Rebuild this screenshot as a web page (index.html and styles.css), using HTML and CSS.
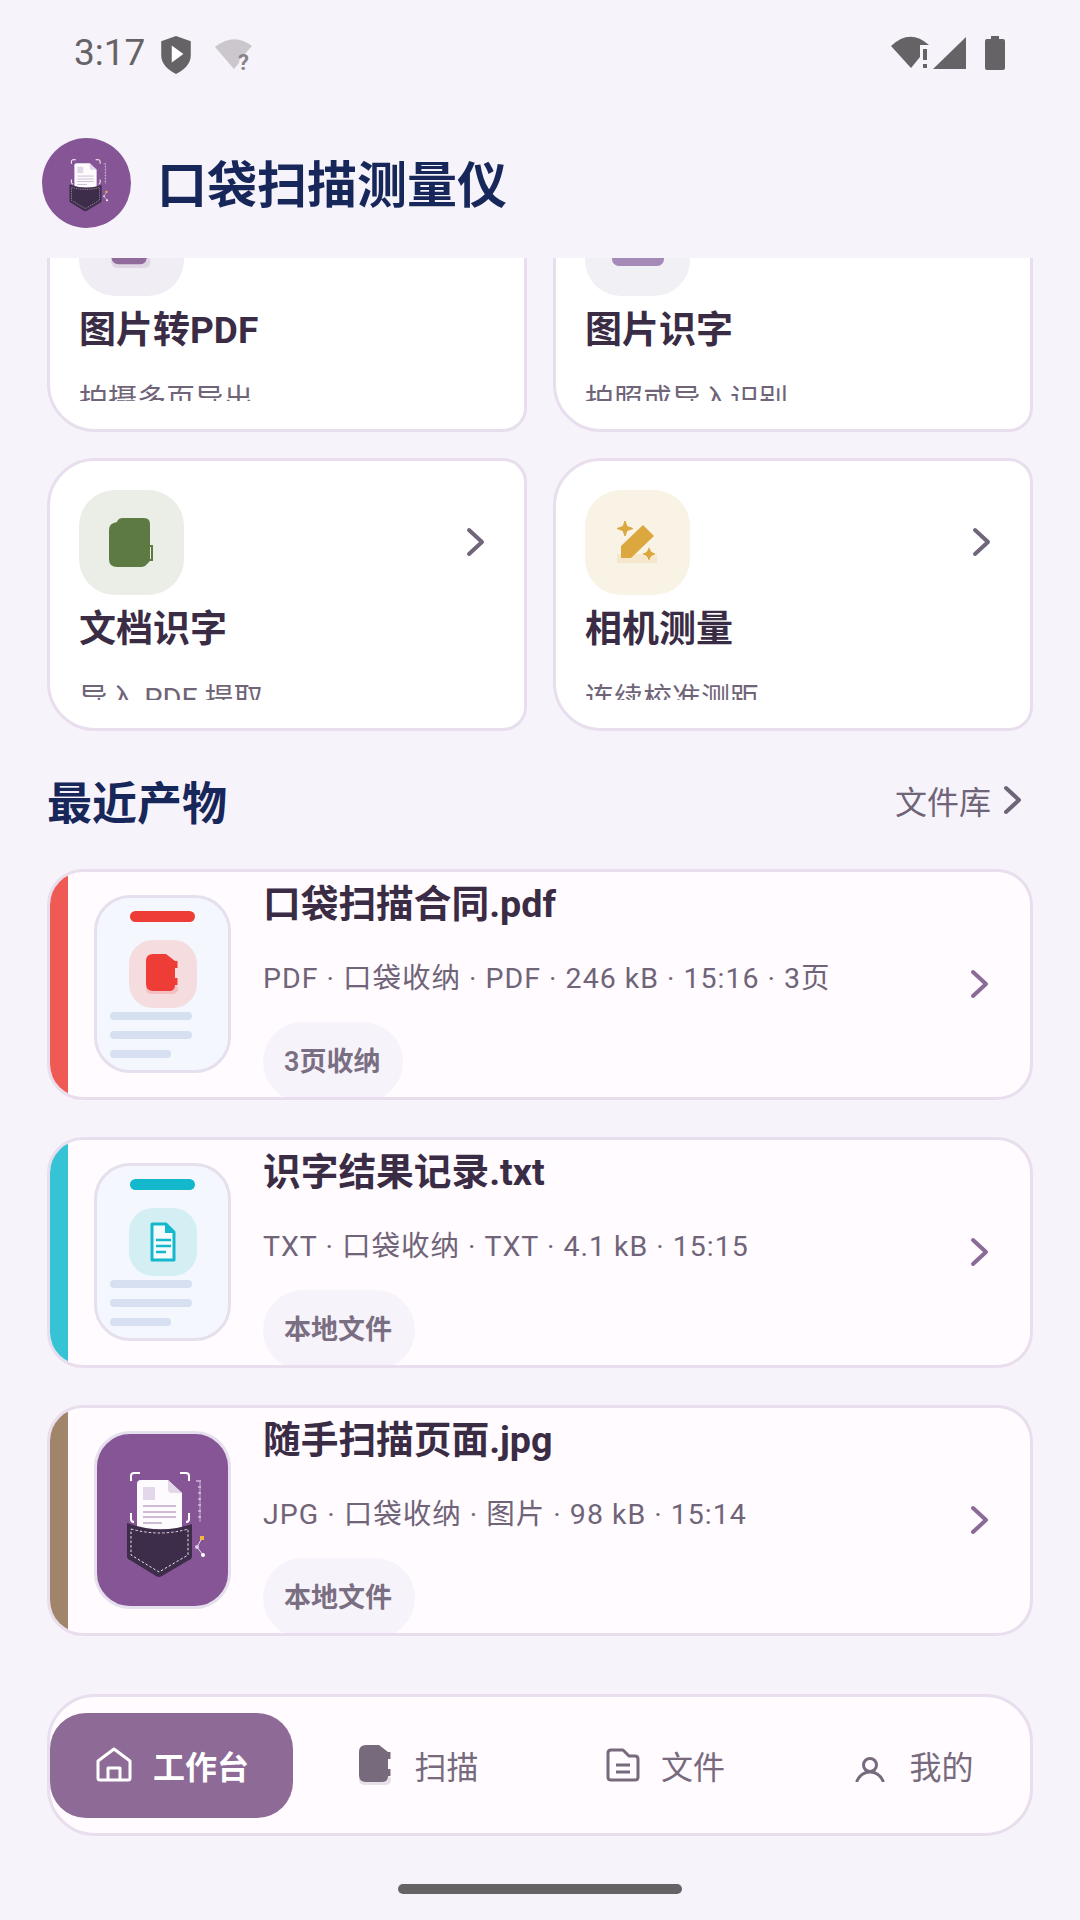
FILE: index.html
```html
<!DOCTYPE html>
<html lang="zh-CN">
<head>
    <meta charset="UTF-8">
    <meta name="viewport" content="width=device-width, initial-scale=1.0">
    <title>口袋扫描测量仪</title>
    <link rel="stylesheet" href="styles.css">
</head>
<body>
    <svg class="defs" width="0" height="0">
        <symbol id="pocket" viewBox="0 0 137 178">
            <path d="M37 50V45Q37 42 40 42H46M86 42H92Q95 42 95 45V50M37 82V88Q37 91 40 91M95 82V88Q95 91 92 91" fill="none" stroke="#fff" stroke-width="2"/>
            <path d="M106 50V91" stroke="#a583b2" stroke-width="2"/>
            <path d="M102 50H107M104 56H107M104 62H107M104 68H107M104 74H107M104 80H107M104 86H107" stroke="#efe8f2" stroke-width="1"/>
            <path d="M47 49H74L88 62V100H43V53Q43 49 47 49Z" fill="#fdfbfe"/>
            <path d="M74 49L88 62H78Q74 62 74 58Z" fill="#e3d8ea"/>
            <rect x="49" y="56" width="12" height="13" fill="#e3d8ea"/>
            <path d="M49 75H82M49 81H82M49 86H82M49 92H68" stroke="#cdbcd6" stroke-width="2"/>
            <path d="M33 92Q66 104 98 93V125Q98 128 95 129L68 145Q65 147 62 145L36 129Q33 128 33 125Z" fill="#3d2c4a"/>
            <path d="M37 98Q66 106 94 98V124L65 141L37 124Z" fill="none" stroke="#e9e2ee" stroke-width="1" stroke-dasharray="2.5 2"/>
            <path d="M108 107L103 116L109 124" fill="none" stroke="#e6dcec" stroke-width="1"/>
            <rect x="106" y="105" width="4" height="4" fill="#f0b93a"/>
            <circle cx="103" cy="116" r="2" fill="#dccde4"/>
            <circle cx="109" cy="124" r="2" fill="#fff"/>
        </symbol>
        <symbol id="blob" viewBox="0 0 44 49">
            <path d="M14 0H35Q41 0 41 6V41Q41 44 38 46Q36 49 32 49H8Q0 49 0 41V12Q0 5 8 4Q9 0 14 0Z" fill="currentColor"/>
            <path d="M40 28H43V42H40" fill="none" stroke="currentColor" stroke-width="2"/>
        </symbol>
        <symbol id="blob-cut" viewBox="0 0 34 40">
            <rect x="0" y="30" width="32" height="10" rx="5" fill="currentColor" opacity=".18"/>
            <path d="M7 0H20L29 7V31Q29 37 23 37H7Q0 37 0 30V7Q0 0 7 0Z" fill="currentColor"/>
            <rect x="29" y="7" width="2.5" height="7" fill="currentColor"/>
            <rect x="29" y="24" width="2.5" height="7" fill="currentColor"/>
        </symbol>
        <symbol id="chev" viewBox="0 0 20 30">
            <path d="M3 3L16 15L3 27" fill="none" stroke="currentColor" stroke-width="4" stroke-linecap="round" stroke-linejoin="round"/>
        </symbol>
    </svg>

    <div class="app">
        <div class="status">
            <span class="clock">3:17</span>
            <svg class="st-shield" width="30" height="38" viewBox="0 0 28 36">
                <path d="M14 0L28 5V18Q28 29 14 36Q0 29 0 18V5Z" fill="#666366"/>
                <path d="M10 9L21 17L10 25Z" fill="#fff"/>
            </svg>
            <svg class="st-wifi-q" width="38" height="32" viewBox="0 0 38 32">
                <path d="M19 30L0 8Q19 -7 37 7L29 16Q24 18 24 24Z" fill="#cbc7cc"/>
                <text x="23" y="31" class="st-q">?</text>
            </svg>
            <span class="st-space"></span>
            <svg class="st-wifi" width="38" height="33" viewBox="0 0 38 33">
                <path d="M20 32L0 10Q19 -8 38 9H29V21Z" fill="#666366"/>
                <rect x="32" y="13" width="4" height="11" fill="#666366"/>
                <rect x="32" y="28" width="4" height="4" fill="#666366"/>
            </svg>
            <svg class="st-signal" width="33" height="32" viewBox="0 0 33 32">
                <path d="M0 32L33 0V32Z" fill="#666366"/>
            </svg>
            <svg class="st-batt" width="20" height="34" viewBox="0 0 20 34">
                <path d="M6 0H14V3H18Q20 3 20 5V32Q20 34 18 34H2Q0 34 0 32V5Q0 3 2 3H6Z" fill="#666366"/>
            </svg>
        </div>

        <header class="top">
            <div class="logo">
                <svg width="68" height="88"><use href="#pocket"/></svg>
            </div>
            <h1>口袋扫描测量仪</h1>
        </header>

        <main class="scroller">
            <div class="tools">
                <div class="tool">
                    <div class="tool-top">
                        <div class="tool-icon tint-plum">
                            <svg width="44" height="49"><use href="#blob-cut"/></svg>
                        </div>
                    </div>
                    <div class="tool-name">图片转PDF</div>
                    <div class="tool-sub"><span>拍摄多页导出</span></div>
                </div>
                <div class="tool">
                    <div class="tool-top">
                        <div class="tool-icon tint-lilac">
                            <svg width="52" height="44" viewBox="0 0 52 44"><rect width="52" height="44" rx="7" fill="currentColor"/></svg>
                        </div>
                    </div>
                    <div class="tool-name">图片识字</div>
                    <div class="tool-sub"><span>拍照或导入识别</span></div>
                </div>
                <div class="tool">
                    <div class="tool-top">
                        <div class="tool-icon tint-green">
                            <svg class="tool-blob" width="44" height="49"><use href="#blob"/></svg>
                        </div>
                        <svg class="tool-chev" width="20" height="30"><use href="#chev"/></svg>
                    </div>
                    <div class="tool-name">文档识字</div>
                    <div class="tool-sub"><span>导入 PDF 提取</span></div>
                </div>
                <div class="tool">
                    <div class="tool-top">
                        <div class="tool-icon tint-gold">
                            <svg width="42" height="44" viewBox="0 0 42 44">
                                <rect x="0" y="33" width="40" height="9" fill="currentColor" opacity=".16"/>
                                <path d="M4 25L26 4L37 15L14 37H4Z" fill="currentColor"/>
                                <path d="M8 0L10 5.5L16 7.5L10 9.5L8 15L6 9.5L0 7.5L6 5.5Z" fill="currentColor" stroke="currentColor" stroke-width="1"/>
                                <path d="M32 25L34.5 30.5L40 33L34.5 35.5L32 41L29.5 35.5L24 33L29.5 30.5Z" fill="currentColor" stroke="#f9f3e6" stroke-width="1"/>
                            </svg>
                        </div>
                        <svg class="tool-chev" width="20" height="30"><use href="#chev"/></svg>
                    </div>
                    <div class="tool-name">相机测量</div>
                    <div class="tool-sub"><span>连续校准测距</span></div>
                </div>
            </div>

            <div class="section-head">
                <h2>最近产物</h2>
                <div class="section-link">
                    <span>文件库</span>
                    <svg width="20" height="30"><use href="#chev"/></svg>
                </div>
            </div>

            <div class="rows">
                <div class="row">
                    <div class="strip strip-red"></div>
                    <div class="thumb thumb-red">
                        <div class="thumb-bar"></div>
                        <div class="thumb-icon">
                            <svg width="34" height="40"><use href="#blob-cut"/></svg>
                        </div>
                        <div class="thumb-line"></div>
                        <div class="thumb-line"></div>
                        <div class="thumb-line short"></div>
                    </div>
                    <div class="row-text">
                        <div class="row-name">口袋扫描合同.pdf</div>
                        <div class="row-meta">PDF · 口袋收纳 · PDF · 246 kB · 15:16 · 3页</div>
                        <div class="chip">3页收纳</div>
                    </div>
                    <svg class="row-chev" width="20" height="30"><use href="#chev"/></svg>
                </div>

                <div class="row">
                    <div class="strip strip-teal"></div>
                    <div class="thumb thumb-teal">
                        <div class="thumb-bar"></div>
                        <div class="thumb-icon">
                            <svg width="26" height="40" viewBox="0 0 26 40">
                                <path d="M2 2H16L24 10V38H2Z" fill="#f4fbfc" stroke="currentColor" stroke-width="3" stroke-linejoin="round"/>
                                <path d="M15 2L24 11H15Z" fill="currentColor"/>
                                <path d="M6 18H21M6 24H21M6 30H16" stroke="currentColor" stroke-width="2.5"/>
                            </svg>
                        </div>
                        <div class="thumb-line"></div>
                        <div class="thumb-line"></div>
                        <div class="thumb-line short"></div>
                    </div>
                    <div class="row-text">
                        <div class="row-name">识字结果记录.txt</div>
                        <div class="row-meta">TXT · 口袋收纳 · TXT · 4.1 kB · 15:15</div>
                        <div class="chip">本地文件</div>
                    </div>
                    <svg class="row-chev" width="20" height="30"><use href="#chev"/></svg>
                </div>

                <div class="row">
                    <div class="strip strip-brown"></div>
                    <div class="thumb thumb-photo">
                        <svg width="131" height="172" viewBox="3 3 131 172"><use href="#pocket" width="137" height="178"/></svg>
                    </div>
                    <div class="row-text">
                        <div class="row-name">随手扫描页面.jpg</div>
                        <div class="row-meta">JPG · 口袋收纳 · 图片 · 98 kB · 15:14</div>
                        <div class="chip">本地文件</div>
                    </div>
                    <svg class="row-chev" width="20" height="30"><use href="#chev"/></svg>
                </div>
            </div>
        </main>

        <nav class="tabs">
            <div class="tab active">
                <svg width="36" height="36" viewBox="0 0 36 36">
                    <path d="M2 14L18 2L34 14V31Q34 33 32 33H4Q2 33 2 31ZM12 33V21H24V33" fill="none" stroke="currentColor" stroke-width="3" stroke-linejoin="round"/>
                </svg>
                <span>工作台</span>
            </div>
            <div class="tab tab-scan">
                <svg width="34" height="40"><use href="#blob-cut"/></svg>
                <span>扫描</span>
            </div>
            <div class="tab tab-file">
                <svg width="34" height="34" viewBox="0 0 34 34">
                    <path d="M2 5Q2 2 5 2H17L23 8H29Q32 8 32 11V29Q32 32 29 32H5Q2 32 2 29ZM10 17H24M10 24H24" fill="none" stroke="currentColor" stroke-width="3" stroke-linejoin="round"/>
                </svg>
                <span>文件</span>
            </div>
            <div class="tab tab-me">
                <svg width="30" height="26" viewBox="0 0 30 26">
                    <circle cx="15" cy="9" r="6.5" fill="none" stroke="currentColor" stroke-width="3"/>
                    <path d="M2 25Q6 16 15 16Q24 16 28 25" fill="none" stroke="currentColor" stroke-width="3" stroke-linecap="round"/>
                </svg>
                <span>我的</span>
            </div>
        </nav>

        <div class="gesture"><div class="gesture-bar"></div></div>
    </div>
</body>
</html>
```

FILE: styles.css
```css
* {
    box-sizing: border-box;
}
html, body {
    margin: 0;
    padding: 0;
}
body {
    background-color: #f7f3fa;
    font-family: Roboto, "Noto Sans CJK SC", sans-serif;
    color: #3a2c44;
}
.defs {
    position: absolute;
}
.app {
    display: flex;
    flex-direction: column;
    width: 1080px;
    height: 1920px;
    overflow: hidden;
}

/* status bar */
.status {
    display: flex;
    align-items: flex-start;
    height: 108px;
    padding: 36px 75px 0 74px;
}
.clock {
    font-size: 37px;
    line-height: 34px;
    color: #666366;
}
.st-shield {
    margin-left: 16px;
}
.st-wifi-q {
    margin-left: 24px;
    margin-top: 3px;
}
.st-q {
    font-family: Roboto, sans-serif;
    font-weight: 700;
    font-size: 22px;
    fill: #868387;
}
.st-space {
    flex: 1;
}
.st-signal {
    margin-left: 4px;
    margin-top: 1px;
}
.st-batt {
    margin-left: 19px;
}

/* app header */
.top {
    display: flex;
    align-items: center;
    gap: 26px;
    height: 150px;
    padding-left: 42px;
}
.logo {
    display: flex;
    align-items: center;
    justify-content: center;
    width: 89px;
    height: 90px;
    border-radius: 50%;
    background-color: #865596;
}
.top h1 {
    margin: 0;
    padding-bottom: 5px;
    font-size: 50px;
    font-weight: 700;
    color: #17275a;
}

/* scrolled content */
.scroller {
    flex: 1;
    overflow: hidden;
    padding: 0 47px;
}
.tools {
    display: grid;
    grid-template-columns: 480px 480px;
    gap: 26px;
    margin-top: -99px;
}
.tool {
    height: 273px;
    padding: 29px 38px 0 29px;
    background-color: #fff;
    border: 3px solid #e8deee;
    border-radius: 48px 24px 24px 48px;
}
.tool-top {
    display: flex;
    align-items: flex-start;
    justify-content: space-between;
}
.tool-icon {
    display: flex;
    align-items: center;
    justify-content: center;
    width: 105px;
    height: 105px;
    border-radius: 36px;
}
.tint-plum { background-color: #f1edf4; color: #916b9b; }
.tint-lilac { background-color: #f1f0f5; color: #a58ab8; }
.tint-green { background-color: #ebeee7; color: #5c7a42; }
.tint-gold { background-color: #f9f3e6; color: #dca73f; }
.tool-blob {
    margin-left: -2px;
}
.tool-chev {
    margin-top: 37px;
    color: #716579;
}
.tool-name {
    margin-top: 14px;
    font-size: 37px;
    font-weight: 700;
    line-height: 42px;
    white-space: nowrap;
}
.tool-sub {
    height: 22px;
    margin-top: 27px;
    overflow: hidden;
    font-size: 29px;
    line-height: 42px;
    color: #6f6478;
    white-space: nowrap;
}

.section-head {
    display: flex;
    align-items: center;
    justify-content: space-between;
    height: 60px;
    margin: 39px 0 39px;
}
.section-head h2 {
    margin: 0;
    font-size: 45px;
    font-weight: 700;
    color: #17275a;
}
.section-link {
    display: flex;
    align-items: center;
    gap: 12px;
    padding-right: 10px;
    font-size: 32px;
    color: #6f6478;
}

/* recent file rows */
.rows {
    display: flex;
    flex-direction: column;
    gap: 37px;
}
.row {
    display: flex;
    align-items: flex-start;
    height: 231px;
    overflow: hidden;
    background-color: #fffbff;
    border: 3px solid #e8deee;
    border-radius: 36px;
}
.strip {
    flex: none;
    width: 18px;
    height: 100%;
}
.strip-red { background-color: #ef5a55; }
.strip-teal { background-color: #35c3d5; }
.strip-brown { background-color: #a0856b; }
.thumb {
    display: flex;
    flex: none;
    flex-direction: column;
    align-items: center;
    width: 137px;
    height: 178px;
    margin: 23px 32px 0 26px;
    padding-top: 13px;
    background-color: #f4f8fe;
    border: 3px solid #e6dfed;
    border-radius: 36px;
}
.thumb-photo {
    padding: 0;
    overflow: hidden;
    background-color: #865596;
}
.thumb-bar {
    width: 65px;
    height: 11px;
    border-radius: 6px;
    background-color: currentColor;
}
.thumb-icon {
    display: flex;
    align-items: center;
    justify-content: center;
    width: 68px;
    height: 68px;
    margin: 18px 0 4px;
    border-radius: 24px;
}
.thumb-red { color: #ee3d37; }
.thumb-red .thumb-icon { background-color: #f4dcdf; }
.thumb-teal { color: #14b8cc; }
.thumb-teal .thumb-icon { background-color: #d4eff3; }
.thumb-line {
    width: 82px;
    height: 8px;
    margin: 0 0 11px -23px;
    border-radius: 4px;
    background-color: #d6e0f0;
}
.thumb-line.short {
    width: 61px;
    margin-left: -44px;
}
.row-text {
    flex: 1;
    min-width: 0;
    padding-top: 9px;
}
.row-name {
    font-size: 37.7px;
    font-weight: 700;
    line-height: 46px;
    white-space: nowrap;
}
.row-meta {
    margin-top: 31px;
    font-size: 28.5px;
    line-height: 42px;
    letter-spacing: 1px;
    color: #6f6478;
    white-space: nowrap;
}
.chip {
    display: inline-block;
    height: 80px;
    margin-top: 22px;
    padding: 20px 23px 0 21px;
    font-size: 27px;
    font-weight: 600;
    line-height: 40px;
    border-radius: 40px;
    background-color: #f6f3fa;
    color: #7a6e82;
}
.row-chev {
    flex: none;
    margin: 97px 40px 0 0;
    color: #8a6a96;
}

/* bottom tabs */
.tabs {
    display: grid;
    flex: none;
    grid-template-columns: repeat(4, 1fr);
    align-items: center;
    height: 142px;
    margin: 0 47px;
    background-color: #fffbff;
    border: 3px solid #e8deee;
    border-radius: 48px;
}
.tab {
    display: flex;
    align-items: center;
    justify-content: center;
    gap: 21px;
    height: 105px;
    font-size: 32px;
    color: #776a7c;
}
.tab.active {
    margin-right: 2px;
    padding-left: 2px;
    border-radius: 36px;
    background-color: #8e6a97;
    color: #fff;
    font-weight: 700;
}
.tab-scan {
    padding-left: 3px;
}
.tab-file {
    padding-left: 6px;
}
.tab-me {
    gap: 24px;
    padding-left: 14px;
}
.tab-me svg {
    margin-top: 8px;
}
.gesture {
    display: flex;
    flex: none;
    justify-content: center;
    height: 84px;
    padding-top: 48px;
}
.gesture-bar {
    width: 284px;
    height: 10px;
    border-radius: 5px;
    background-color: #666366;
}
```
